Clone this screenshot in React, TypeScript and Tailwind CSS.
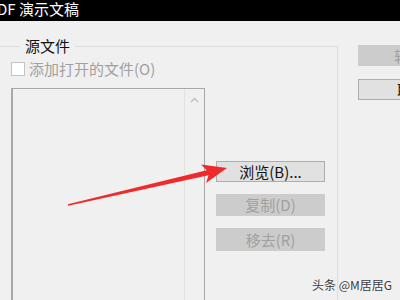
import React from 'react';

const font = { fontFamily: '"Noto Sans CJK SC", "Noto Sans", sans-serif' };

export default function App() {
  return (
    <div
      className="relative w-[400px] h-[300px] overflow-hidden bg-[#f0f0f0] text-[15px] leading-[18px]"
      style={font}
    >
      {/* title bar */}
      <div className="h-[21px] bg-black text-white whitespace-nowrap -ml-[3px] leading-[17px]">
        DF 演示文稿
      </div>

      <div className="flex">
        {/* source files group */}
        <fieldset className="mt-[16px] w-[338px] h-[300px] border-t border-r border-[#dcdcdc] shrink-0">
          <legend className="ml-[20px] px-[5px] text-[#111] leading-[18px]">源文件</legend>

          <div className="flex items-center gap-[4px] pl-[11px] mt-[6px] h-[15px]">
            <span className="w-[14px] h-[14px] bg-white border border-[#c4c4c4]" />
            <span className="text-[#a0a0a0] whitespace-nowrap">添加打开的文件(O)</span>
          </div>

          <div className="flex pl-[11px] mt-[12px]">
            {/* file list */}
            <div className="w-[194px] h-[240px] border border-[#a8a8a8] border-l-2 flex justify-end">
              <div className="w-[20px] border-l border-[#e2e2e2] flex justify-center pt-[8px]">
                <svg width="9" height="6" viewBox="0 0 9 6">
                  <path d="M1 5 L4.5 1.5 L8 5" fill="none" stroke="#bdbdbd" strokeWidth="1.3" />
                </svg>
              </div>
            </div>

            {/* action buttons */}
            <div className="ml-[11px] pt-[73px] flex flex-col gap-[12px]">
              <button className="w-[109px] h-[21px] bg-[#e1e1e1] border border-[#adadad] text-[#111] text-[15px] leading-[18px]">
                浏览(B)...
              </button>
              <button className="w-[109px] h-[22px] bg-[#cccccc] text-[#a0a0a0] text-[15px] leading-[18px]">
                复制(D)
              </button>
              <button className="w-[109px] h-[23px] bg-[#cccccc] text-[#a0a0a0] text-[15px] leading-[18px]">
                移去(R)
              </button>
            </div>
          </div>
        </fieldset>

        {/* right column buttons */}
        <div className="ml-[20px] pt-[24px] flex flex-col gap-[13px]">
          <button className="w-[100px] h-[21px] bg-[#cccccc] text-[#a0a0a0] text-left pl-[36px] whitespace-nowrap">
            转换
          </button>
          <button className="w-[100px] h-[21px] bg-[#e1e1e1] border border-[#adadad] text-[#111] text-left pl-[38px] whitespace-nowrap">
            取消
          </button>
        </div>
      </div>

      {/* red annotation arrow */}
      <svg className="absolute inset-0 pointer-events-none" width="400" height="300">
        <polygon
          points="68.2,205.8 208.5,175.2 206,183 227,168 201,164.5 206.7,170.2 67.8,204.2"
          fill="#f02a2a"
        />
      </svg>

      {/* watermark */}
      <div className="absolute right-[8px] bottom-[8px] text-[12px] leading-[14px] text-[#3a3a3a] [text-shadow:0_0_2px_#fff]">
        头条 @M居居G
      </div>
    </div>
  );
}
